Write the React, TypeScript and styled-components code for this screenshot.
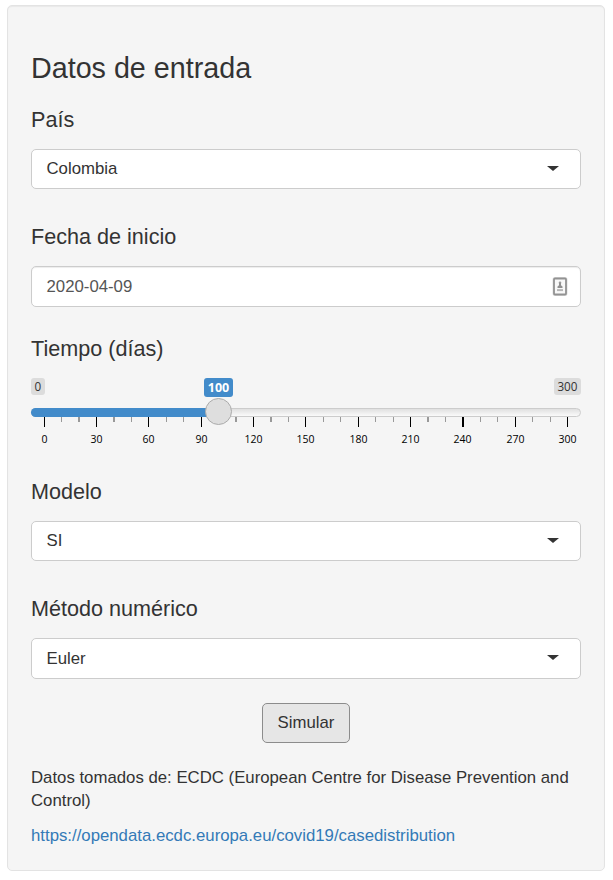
import React from "react";
import styled, { createGlobalStyle } from "styled-components";

const GlobalStyle = createGlobalStyle`
  * { box-sizing: border-box; }
  body {
    margin: 0;
    background: #fff;
    color: #333;
    font-family: "Liberation Sans", Arial, sans-serif;
    font-size: 16.77px;
    line-height: 23px;
  }
`;

const Panel = styled.form`
  display: flex;
  flex-direction: column;
  width: 598px;
  height: 866px;
  margin: 5px 0 0 7px;
  padding: 46px 23px 0;
  background: #f5f5f5;
  border: 1px solid #e3e3e3;
  border-radius: 5px;
  box-shadow: inset 0 1px 1px rgba(0, 0, 0, 0.05);
`;

const Title = styled.h3`
  margin: 0 0 24px;
  font-size: 28.7px;
  line-height: 32px;
  font-weight: 400;
`;

const Group = styled.div<{ $gap: number }>`
  display: flex;
  flex-direction: column;
  gap: 17px;
  margin-bottom: ${(p) => p.$gap}px;
`;

const Label = styled.label`
  font-size: 21.6px;
  line-height: 24px;
`;

const Control = styled.div<{ $tall?: boolean; $muted?: boolean }>`
  display: flex;
  align-items: center;
  justify-content: space-between;
  height: ${(p) => (p.$tall ? 41 : 40)}px;
  padding: ${(p) => (p.$muted ? "0 12px 1px 14.5px" : "0 21px 1px 14.5px")};
  background: #fff;
  border: 1px solid #ccc;
  border-radius: 5px;
  color: ${(p) => (p.$muted ? "#555" : "#333")};
  box-shadow: ${(p) => (p.$muted ? "inset 0 1px 1px rgba(0, 0, 0, 0.075)" : "none")};
`;

const Caret = styled.span`
  border: 6px solid transparent;
  border-top: 5px solid #333;
  border-bottom: 0;
  margin-top: -1px;
`;

const Slider = styled.div`
  position: relative;
  height: 71px;
`;

const Limits = styled.div`
  display: flex;
  justify-content: space-between;
  height: 30px;
`;

const Limit = styled.span`
  height: 17px;
  padding: 0 3.5px;
  background: #dcdcdc;
  border-radius: 3px;
  font: 11.7px/16px "Open Sans", sans-serif;
`;

const Track = styled.div`
  height: 9px;
  background: linear-gradient(#e0e0e0, #fafafa);
  border: 1px solid #ccc;
  border-radius: 5px;
`;

const Fill = styled.div`
  width: 188px;
  height: 9px;
  margin: -1px;
  background: #428bca;
  border-radius: 5px 0 0 5px;
`;

const Current = styled.output`
  position: absolute;
  left: 173px;
  top: 0;
  width: 29px;
  height: 19px;
  background: #428bca;
  border-radius: 3px;
  color: #fff;
  text-align: center;
  font: 700 12.5px/19px "Open Sans", sans-serif;
`;

const Handle = styled.span`
  position: absolute;
  left: 174px;
  top: 20px;
  width: 27px;
  height: 27px;
  background: #dedede;
  border: 1px solid #ababab;
  border-radius: 50%;
`;

const Scale = styled.svg`
  display: block;
  font: 10.5px "Open Sans", sans-serif;
`;

const Submit = styled.button`
  align-self: center;
  width: 88px;
  height: 40px;
  padding: 0 0 1px;
  margin-bottom: 23px;
  background: #e6e6e6;
  border: 1px solid #8c8c8c;
  border-radius: 5px;
  color: #333;
  font: inherit;
`;

const Source = styled.p`
  margin: 0 0 12px;
`;

const Link = styled.a`
  color: #337ab7;
  text-decoration: none;
`;

const major = [13, 65, 117, 170, 222, 274, 327, 379, 431, 484, 536];
const minor: [number, number][] = [
  [30, 1], [47, 2], [82, 2], [100, 1], [135, 1], [152, 1], [187, 2], [204, 2],
  [239, 2], [257, 1], [292, 1], [309, 1], [344, 1], [362, 1], [396, 2], [414, 1],
  [449, 1], [466, 1], [501, 1], [519, 1],
];

const Ruler = () => (
  <Scale width="550" height="32" shapeRendering="crispEdges">
    {minor.map(([x, w]) => (
      <rect key={x} x={x} y="0" width={w} height="5" fill="#999" />
    ))}
    {major.map((x, i) => (
      <g key={x}>
        <rect x={x} y="0" width={i === 8 ? 2 : 1} height="10" fill="#000" />
        <text x={x + 0.5} y="26" textAnchor="middle" fill="#000">
          {i * 30}
        </text>
      </g>
    ))}
  </Scale>
);

const ContactIcon = () => (
  <svg width="16" height="20" viewBox="0 -0.5 16 20">
    <rect x="2" y="2" width="12" height="16" rx="1" fill="#fff" stroke="#e0e0e0" strokeWidth="3" />
    <rect x="2" y="2" width="12" height="16" rx="1" fill="#f8f8f8" stroke="#929292" strokeWidth="1.8" />
    <circle cx="8" cy="6.2" r="1.3" fill="#999" />
    <path d="M5.5 11.5V9.9L7 8.8V6.5H9V8.8L10.5 9.9V11.5Z" fill="#909090" />
    <path d="M5 13.6H11" stroke="#b5b5b5" strokeWidth="2" />
  </svg>
);

interface SelectProps {
  label: string;
  value: string;
  gap: number;
  tall?: boolean;
}

const Select = ({ label, value, gap, tall }: SelectProps) => (
  <Group $gap={gap}>
    <Label>{label}</Label>
    <Control $tall={tall}>
      {value}
      <Caret />
    </Control>
  </Group>
);

export default function App() {
  return (
    <>
      <GlobalStyle />
      <Panel>
        <Title>Datos de entrada</Title>
        <Select label="País" value="Colombia" gap={36} />
        <Group $gap={30}>
          <Label>Fecha de inicio</Label>
          <Control $tall $muted>
            2020-04-09
            <ContactIcon />
          </Control>
        </Group>
        <Group $gap={31}>
          <Label>Tiempo (días)</Label>
          <Slider>
            <Limits>
              <Limit>0</Limit>
              <Limit>300</Limit>
            </Limits>
            <Track>
              <Fill />
            </Track>
            <Ruler />
            <Current>100</Current>
            <Handle />
          </Slider>
        </Group>
        <Select label="Modelo" value="SI" gap={36} />
        <Select label="Método numérico" value="Euler" gap={24} tall />
        <Submit type="button">Simular</Submit>
        <Source>
          Datos tomados de: ECDC (European Centre for Disease Prevention and Control)
        </Source>
        <Link href="#">https://opendata.ecdc.europa.eu/covid19/casedistribution</Link>
      </Panel>
    </>
  );
}
